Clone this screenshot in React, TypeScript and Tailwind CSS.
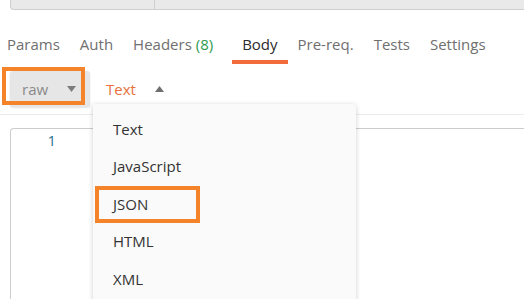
import React from "react";

const tabs = [
  { label: "Params" },
  { label: "Auth" },
  { label: "Headers", count: "(8)" },
  { label: "Body", active: true },
  { label: "Pre-req." },
  { label: "Tests" },
  { label: "Settings" },
];

const items = ["Text", "JavaScript", "JSON", "HTML", "XML"];

export default function App() {
  return (
    <div
      className="relative w-[524px] h-[299px] overflow-hidden bg-white"
      style={{ fontFamily: "'Open Sans', 'Noto Sans', sans-serif" }}
    >
      {/* top input bar remnant */}
      <div className="ml-[10px] h-[10px] flex bg-[#e9e9e9] border-b border-l border-[#cfcfcf] rounded-bl-[4px]">
        <div className="w-[144px] h-full border-r border-[#cfcfcf]" />
        <div className="flex-1" />
      </div>

      {/* tabs */}
      <div className="flex items-end h-[54px] ml-[-3px]">
        {tabs.map((t) => (
          <div
            key={t.label}
            className={`px-[10px] pb-[6px] border-b-[4px] leading-[20px] text-[15px] whitespace-nowrap ${
              t.active
                ? "border-[#f26b3a] text-[#2b2b2b] ml-[9px]"
                : "border-transparent text-[#6f6f6f]"
            }`}
          >
            {t.label}
            {t.count && <span className="text-[#2f9a52]"> {t.count}</span>}
          </div>
        ))}
      </div>

      {/* body type row */}
      <div className="flex items-center h-[51px] border-b border-[#ececec]">
        <div className="ml-[10px] w-[80px] h-[36px] bg-[#e6e6e6] rounded-[3px] shadow-[0_1px_2px_rgba(0,0,0,0.12)] flex items-center pl-[12px] pr-[14px] justify-between">
          <span className="text-[15px] text-[#8a8a8a] leading-[20px]">raw</span>
          <svg width="9" height="6" viewBox="0 0 9 6">
            <path d="M0 0 H9 L4.5 6 Z" fill="#7d7d7d" />
          </svg>
        </div>
        <div className="ml-[16px] flex items-center">
          <span className="text-[15px] text-[#e7703c] leading-[20px]">Text</span>
          <svg className="ml-[19px]" width="9" height="6" viewBox="0 0 9 6">
            <path d="M0 6 H9 L4.5 0 Z" fill="#6f6f6f" />
          </svg>
        </div>
      </div>

      {/* editor */}
      <div className="mt-[13px] ml-[10px] h-[200px] border-t border-l border-[#cccccc] rounded-tl-[4px]">
        <div className="w-[45px] text-right pt-[1px] text-[15px] leading-[20px] text-[#2b7390]">1</div>
      </div>

      {/* dropdown menu */}
      <div className="absolute left-[93px] top-[104px] w-[263px] h-[200px] bg-[#fafafa] rounded-tr-[4px] shadow-[0_1px_5px_rgba(0,0,0,0.2)] pt-[6px]">
        {items.map((it) => (
          <div
            key={it}
            className="h-[37.5px] flex items-center pl-[20px] text-[15px] text-[#333333]"
          >
            {it}
          </div>
        ))}
      </div>

      {/* annotation boxes */}
      <div className="absolute left-[2px] top-[67px] w-[83px] h-[38px] border-[4px] border-[#f5832a]" />
      <div className="absolute left-[95px] top-[186px] w-[105px] h-[37px] border-[4px] border-[#f5832a]" />
    </div>
  );
}
